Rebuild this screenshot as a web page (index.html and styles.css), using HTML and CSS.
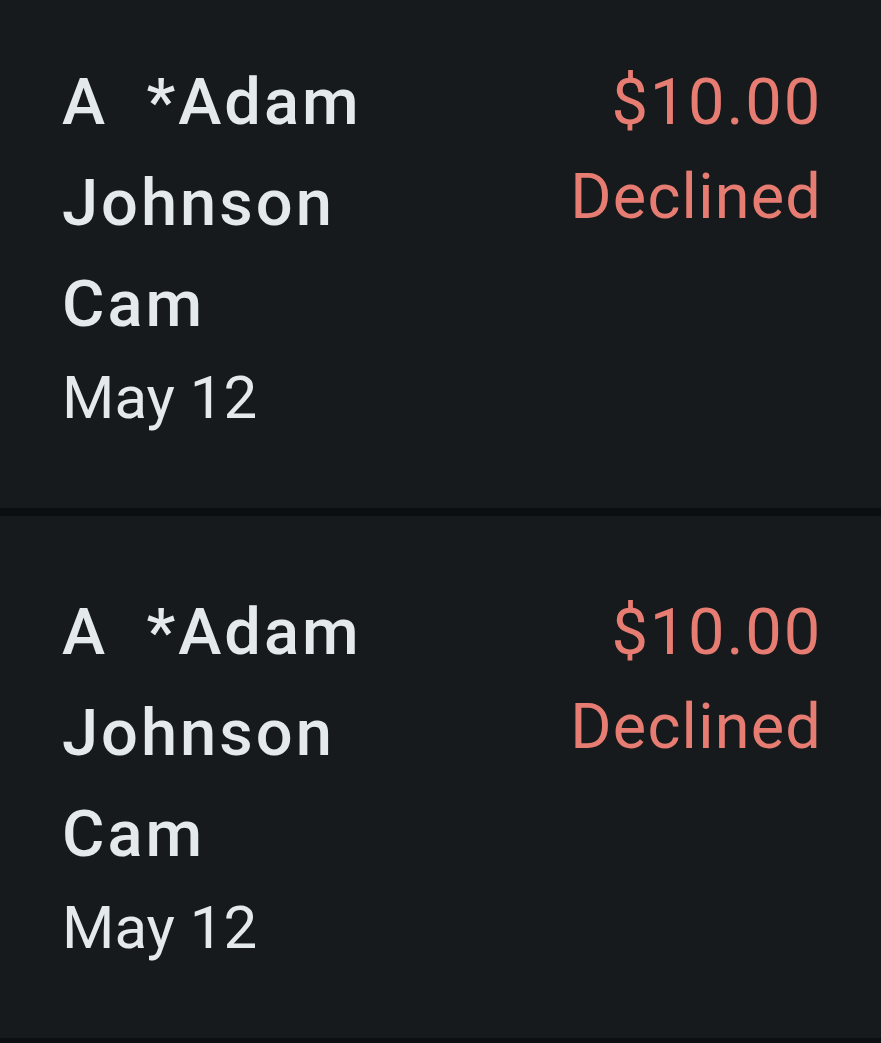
FILE: index.html
```html
<!DOCTYPE html>
<html lang="en">
<head>
    <meta charset="UTF-8">
    <meta name="viewport" content="width=device-width, initial-scale=1.0">
    <title>Transactions</title>
    <link rel="stylesheet" href="styles.css">
</head>
<body>
    <div class="list">
        <div class="txn">
            <div class="txn-info">
                <div class="merchant">A&nbsp; *Adam Johnson Cam</div>
                <div class="date">May 12</div>
            </div>
            <div class="txn-amount">
                <div class="amount">$10.00</div>
                <div class="status">Declined</div>
            </div>
        </div>
        <div class="txn">
            <div class="txn-info">
                <div class="merchant">A&nbsp; *Adam Johnson Cam</div>
                <div class="date">May 12</div>
            </div>
            <div class="txn-amount">
                <div class="amount">$10.00</div>
                <div class="status">Declined</div>
            </div>
        </div>
    </div>
</body>
</html>
```

FILE: styles.css
```css
body{
    margin: 0;
    background-color: #0c0f11;
    font-family: Roboto, "Noto Sans", sans-serif;
}
.list{
    display: flex;
    flex-direction: column;
    gap: 8px;
}
.txn{
    background-color: #171a1d;
    display: flex;
    justify-content: space-between;
    align-items: flex-start;
    height: 522px;
    box-sizing: border-box;
    padding: 66px 59px 0 62px;
}
/* top card is cut off by the screen edge */
.txn:first-child{
    height: 508px;
    padding-top: 52px;
}
.txn-info{
    width: 330px;
}
.merchant{
    color: #e4e9ec;
    font-size: 65px;
    font-weight: 500;
    letter-spacing: 3px;
    line-height: 101px;
}
.date{
    color: #e4e9ec;
    font-size: 60px;
    line-height: 85px;
}
.txn-amount{
    text-align: right;
    color: #e67c72;
}
.amount{
    font-size: 65px;
    letter-spacing: 1.8px;
    line-height: 101px;
}
.status{
    font-size: 63px;
    letter-spacing: 1.2px;
    line-height: 87px;
}
```
